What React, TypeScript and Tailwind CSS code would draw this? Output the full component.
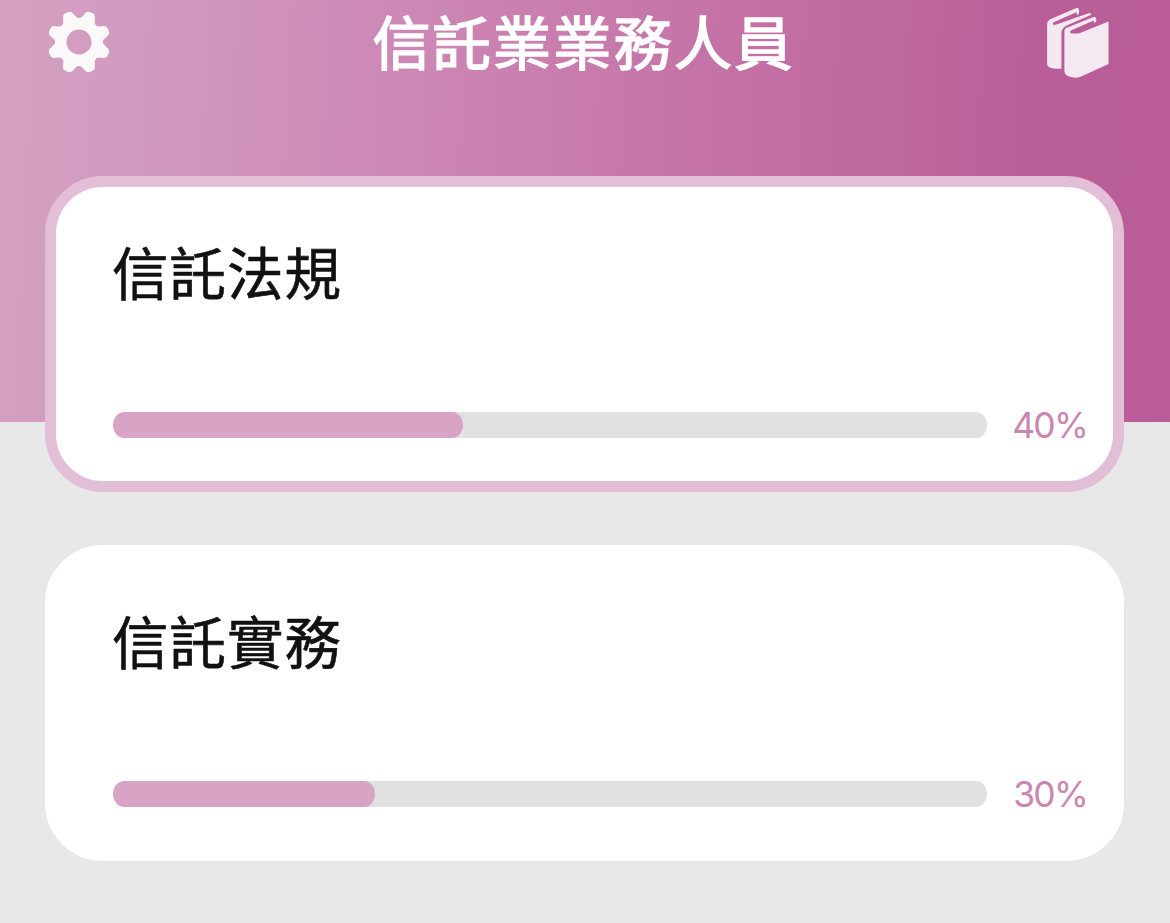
const subjects = [
  { id: 1, title: '信託法規', progress: 40, active: true },
  { id: 2, title: '信託實務', progress: 30, active: false },
];

const toothAngles = [22.5, 67.5, 112.5, 157.5, 202.5, 247.5, 292.5, 337.5];

function GearIcon() {
  return (
    <svg viewBox="-100 -100 200 200" className="size-[66px]" fill="#fbf8fa">
      <circle r="55" fill="none" stroke="#fbf8fa" strokeWidth="34" />
      {toothAngles.map((angle) => (
        <path
          key={angle}
          transform={`rotate(${angle})`}
          d="M-30 -60L-28 -66Q-20 -70 -18 -82Q-16 -92 -10 -95Q0 -98 10 -95Q16 -92 18 -82Q20 -70 28 -66L30 -60Z"
        />
      ))}
    </svg>
  );
}

function BooksIcon() {
  return (
    <svg viewBox="50 15 192 220" className="h-[73px] w-16" fill="#f4e9f1">
      <path d="M53 68Q53 60 61 56L139 22Q149 18 149 26V38L143 42L141 34L74 63Q66 68 73 72L81 71L178 37Q185 35 186 41L112 74Q96 82 96 96V204H80Q53 203 53 190Z" />
      <path d="M105 92Q105 83 114 80L191 49Q201 46 201 54V62L195 66L193 59L125 89Q119 94 126 98L144 98Q150 98 156 95L238 62V190L154 228Q146 231 138 231Q105 230 105 212Z" />
    </svg>
  );
}

export default function App() {
  return (
    <div className="h-[923px] w-[1170px] bg-[#e8e8e8] font-['Noto_Sans_CJK_TC',sans-serif]">
      {/* header */}
      <header className="h-[422px] bg-[linear-gradient(93deg,#d4a1c1_0%,#d19abf_12%,#cd88b5_34%,#c26ca2_68%,#ba5e99_88%,#b95c98_100%)]">
        <div className="flex h-[84px] items-center justify-between pr-[60px] pl-[46px]">
          <GearIcon />
          <h1 className="-mt-1 pl-[9px] text-[58px] leading-[80px] tracking-[2.3px] text-white [-webkit-text-stroke:1.6px_#fff]">
            信託業業務人員
          </h1>
          <BooksIcon />
        </div>
      </header>

      {/* subject cards */}
      <main className="-mt-[246px] flex flex-col gap-[53px] pr-[46px] pl-[45px]">
        {subjects.map((subject) => (
          <section
            key={subject.id}
            className={`flex h-[316px] flex-col justify-between rounded-[58px] border-[11px] bg-white pt-10 pr-[26px] pb-[43px] pl-[57px] ${
              subject.active ? 'border-[#e3bed7]' : 'border-white'
            }`}
          >
            <h2 className="-ml-px text-[56.5px] leading-[86px] tracking-[1px] text-[#111] [-webkit-text-stroke:0.6px_#111]">
              {subject.title}
            </h2>
            <div className="flex h-[26px] items-center justify-between">
              <div className="h-[26px] w-[874px] overflow-hidden rounded-[11px/13px] bg-[#e1e1e1]">
                <div className="h-full rounded-[11px/13px] bg-[#d8a3c4]" style={{ width: `${subject.progress}%` }} />
              </div>
              <span className="pt-px font-['Inter',sans-serif] text-[35.5px] leading-none tracking-[-1.8px] text-[#ca86b1]">
                {subject.progress}%
              </span>
            </div>
          </section>
        ))}
      </main>
    </div>
  );
}
